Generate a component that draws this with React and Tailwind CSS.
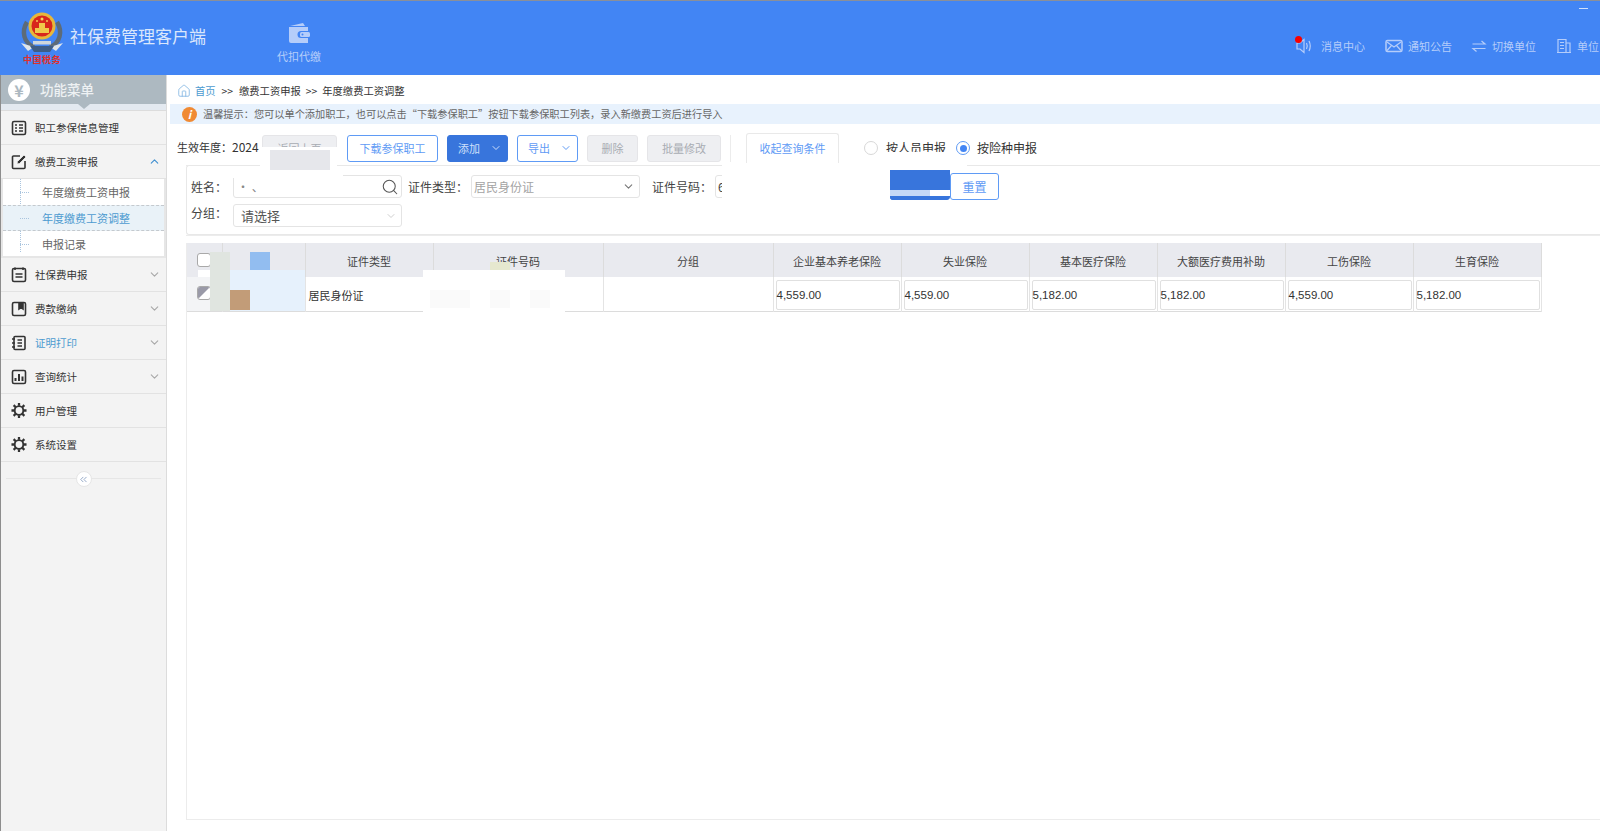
import { ChevronDown, ChevronUp, ChevronsLeft, Home, Search } from "lucide-react";

const font = { fontFamily: '"Noto Sans CJK SC", "Liberation Sans", sans-serif' };

const columns = [
  { label: "企业基本养老保险", value: "4,559.00" },
  { label: "失业保险", value: "4,559.00" },
  { label: "基本医疗保险", value: "5,182.00" },
  { label: "大额医疗费用补助", value: "5,182.00" },
  { label: "工伤保险", value: "4,559.00" },
  { label: "生育保险", value: "5,182.00" },
];

function Logo() {
  return (
    <div className="w-[44px] flex flex-col items-center shrink-0">
      <svg width="44" height="42" viewBox="0 0 44 42">
        <path d="M7 10 C1 20 4 31 14 35 M37 10 C43 20 40 31 30 35" stroke="#5d6b78" strokeWidth="4.5" fill="none" />
        <path d="M1 31 L14 35 L8 39 Z M43 31 L30 35 L36 39 Z" fill="#dfe5ea" />
        <path d="M10 34 L34 34 L30 40 L14 40 Z" fill="#3f5d86" />
        <circle cx="22" cy="14" r="13.5" fill="#e8b73a" />
        <circle cx="22" cy="14" r="10.5" fill="#d8261c" />
        <rect x="15" y="16" width="14" height="5" fill="#f0c84a" />
        <rect x="19" y="11" width="6" height="5" fill="#f0c84a" />
        <circle cx="22" cy="7" r="1.5" fill="#f5d65a" />
        <circle cx="17" cy="9" r="0.9" fill="#f5d65a" />
        <circle cx="27" cy="9" r="0.9" fill="#f5d65a" />
        <rect x="13" y="29" width="18" height="3.5" fill="#cfd6dc" />
      </svg>
      <span
        className="text-[9px] leading-[12px] tracking-[0.5px] font-bold text-[#e0302a] whitespace-nowrap"
        style={{ fontFamily: '"Noto Sans CJK SC", serif' }}
      >
        中国税务
      </span>
    </div>
  );
}

function WalletIcon() {
  return (
    <svg width="24" height="24" viewBox="0 0 24 24" fill="#b5cdfa">
      <path d="M3 5 L16 2 L18 5 Z" />
      <path d="M2 6 H21 V10 H14 a3.5 3.5 0 0 0 0 7 H21 V22 H4 a2 2 0 0 1 -2 -2 Z" />
      <rect x="13" y="11" width="10" height="5" rx="1.5" />
      <circle cx="15.5" cy="13.5" r="1" fill="#4285f4" />
    </svg>
  );
}

function TopIcon({ kind }) {
  const p = { width: 18, height: 16, viewBox: "0 0 18 16", fill: "none", stroke: "#b5cdfa", strokeWidth: 1.2 };
  return (
    <svg {...p}>
      {kind === "sound" && (
        <>
          <path d="M2 5 H5 L9 1.5 V14.5 L5 11 H2 Z" />
          <path d="M11.5 5 Q13 8 11.5 11 M14 3 Q16.5 8 14 13" />
        </>
      )}
      {kind === "mail" && (
        <>
          <rect x="1" y="2.5" width="16" height="11" rx="1.5" strokeWidth="1.5" />
          <path d="M2 4 L9 9 L16 4 M2 12.5 L6.5 7.5 M16 12.5 L11.5 7.5" />
        </>
      )}
      {kind === "swap" && <path d="M2.5 6 H15 L11.5 3 M15.5 10.5 H3 L6.5 13.5" />}
      {kind === "unit" && (
        <path d="M2 14.5 H16 M3 14.5 V1.5 H11 V14.5 M11 5 H15 V14.5 M5 4.5 H9 M5 7.5 H9 M5 10.5 H9" />
      )}
    </svg>
  );
}

function TopLink({ icon, label, dot, className }) {
  return (
    <div className={`flex items-center text-[11px] text-[#b5cdfa] whitespace-nowrap shrink-0 ${className}`}>
      <span className="relative flex w-[18px] justify-center">
        <TopIcon kind={icon} />
        {dot && <span className="absolute left-[0px] -top-[2px] w-[7px] h-[7px] rounded-full bg-[#f80000]" />}
      </span>
      <span>{label}</span>
    </div>
  );
}

function MenuGlyph({ kind }) {
  const common = { width: 16, height: 16, viewBox: "0 0 16 16", fill: "none", stroke: "#333", strokeWidth: 1.6 };
  if (kind === "gear") {
    return (
      <svg width="17" height="17" viewBox="0 0 17 17" fill="none" stroke="#333">
        <circle cx="8.5" cy="8.5" r="4.6" strokeWidth="2" />
        <path
          d="M8.5 .5 V3.5 M8.5 13.5 V16.5 M.5 8.5 H3.5 M13.5 8.5 H16.5 M2.8 2.8 L5 5 M12 12 L14.2 14.2 M14.2 2.8 L12 5 M5 12 L2.8 14.2"
          strokeWidth="2.4"
        />
      </svg>
    );
  }
  return (
    <svg {...common}>
      {kind === "book" ? (
        <>
          <rect x="3" y="1.5" width="11" height="13" rx="1" />
          <path d="M1 4 H4 M1 8 H4 M1 12 H4 M6.5 5 H11 M6.5 8 H11 M6.5 11 H11" />
        </>
      ) : kind === "edit" ? (
        <path d="M9 2 H2.5 a1 1 0 0 0 -1 1 V13.5 a1 1 0 0 0 1 1 H13 a1 1 0 0 0 1 -1 V7" />
      ) : (
        <rect x="1.5" y="1.5" width="13" height="13" rx="1.5" />
      )}
      {kind === "list" && <path d="M4 5 H6 M4 8 H6 M4 11 H6 M8 5 H12 M8 8 H12 M8 11 H12" />}
      {kind === "edit" && <path d="M6 10 L6.5 7.5 L13 1 L15 3 L8.5 9.5 Z" fill="#333" stroke="#f3f3f3" strokeWidth="0.8" />}
      {kind === "cal" && <path d="M4 .5 V3 M12 .5 V3 M4.5 7 H11.5 M4.5 10 H11.5" />}
      {kind === "pay" && <path d="M8 2 V8 L10 6.5 L12 8 V2" fill="#333" />}
      {kind === "chart" && <path d="M4.5 12 V9 M8 12 V5 M11.5 12 V7.5" strokeWidth="2" />}
    </svg>
  );
}

function MenuItem({ icon, label, chevron, open, active }) {
  return (
    <div className="h-[34px] flex items-center pl-[10px] pr-[5px] border-b border-[#e2e2e2] shrink-0">
      <span className="w-[16px] flex justify-center"><MenuGlyph kind={icon} /></span>
      <span className={`ml-[8px] text-[10.5px] ${active ? "text-[#4d9bd0]" : "text-[#333]"}`}>{label}</span>
      {chevron && (
        <span className="ml-auto">
          {open ? <ChevronUp size={13} color="#3f8fd0" strokeWidth={2} /> : <ChevronDown size={13} color="#a8a8a8" strokeWidth={2} />}
        </span>
      )}
    </div>
  );
}

function SubItem({ label, active }) {
  return (
    <div className={`h-[26px] flex items-center pl-[17px] relative ${active ? "bg-[#e9f2f8] border-y border-dashed border-[#c4c9ce]" : ""}`}>
      <span className="w-[9px] border-t border-dotted border-[#a9c4de]" />
      <span className={`ml-[13px] text-[11px] ${active ? "text-[#4d9bd0]" : "text-[#666]"}`}>{label}</span>
    </div>
  );
}

function Sidebar() {
  return (
    <aside className="w-[167px] shrink-0 bg-[#f3f3f3] border-l border-[#8d8d8d] border-r border-r-[#dcdcdc] flex flex-col">
      <div className="h-[29px] bg-[#adb9c1] flex items-center pl-[7px] shrink-0">
        <span className="w-[22px] h-[22px] rounded-full bg-white text-[#adb9c1] text-[16px] font-bold flex items-center justify-center">¥</span>
        <span className="ml-[10px] text-[13.5px] text-[#eef1f3] font-medium">功能菜单</span>
      </div>
      <div className="h-[7px] bg-[#e3e9f0] relative shrink-0 border-b border-[#dcdcdc]">
        <span className="absolute left-[77px] top-0 border-x-[6px] border-x-transparent border-t-[5px] border-t-[#adb9c1]" />
      </div>
      <MenuItem icon="list" label="职工参保信息管理" />
      <MenuItem icon="edit" label="缴费工资申报" chevron open />
      <div className="relative h-[79px] shrink-0 bg-white border-x-[2px] border-b-[2px] border-[#e6e6e6]">
        <span className="absolute left-[17px] top-0 h-[73px] border-l border-dotted border-[#a9c4de]" />
        <SubItem label="年度缴费工资申报" />
        <SubItem label="年度缴费工资调整" active />
        <SubItem label="申报记录" />
      </div>
      <MenuItem icon="cal" label="社保费申报" chevron />
      <MenuItem icon="pay" label="费款缴纳" chevron />
      <MenuItem icon="book" label="证明打印" chevron active />
      <MenuItem icon="chart" label="查询统计" chevron />
      <MenuItem icon="gear" label="用户管理" />
      <MenuItem icon="gear" label="系统设置" />
      <div className="relative mx-[5px] mt-[16px] border-t border-[#e6e6e6] flex justify-center">
        <span className="absolute -top-[8px] w-[16px] h-[16px] rounded-full bg-white border border-[#e6e6e6] flex items-center justify-center">
          <ChevronsLeft size={11} color="#8da3c4" />
        </span>
      </div>
    </aside>
  );
}

function Btn({ children, kind, className = "" }) {
  const styles = {
    line: "border-[#5f9bf5] text-[#5f9bf5] bg-white",
    solid: "border-[#3875dc] bg-[#3875dc] text-[#cfe0fb]",
    off: "border-[#e5e5e8] bg-[#eeeff2] text-[#a8acb2]",
  };
  return (
    <span className={`h-[27px] rounded-[3px] border flex items-center justify-center text-[11px] shrink-0 ${styles[kind]} ${className}`}>
      {children}
    </span>
  );
}

function Toolbar() {
  return (
    <div className="h-[30px] mt-[9px] ml-[177px] flex items-center text-[11px] text-[#333]">
      <span className="w-[85px] -mt-[2px] overflow-hidden whitespace-nowrap">生效年度：<span className="text-[12px]">2024</span></span>
      <Btn kind="off" className="w-[75px]">返回上页</Btn>
      <Btn kind="line" className="w-[91px] ml-[10px]">下载参保职工</Btn>
      <Btn kind="solid" className="w-[61px] ml-[9px] gap-[10px] pl-[5px]">
        <span>添加</span>
        <ChevronDown size={12} />
      </Btn>
      <Btn kind="line" className="w-[61px] ml-[9px] gap-[10px] pl-[5px]">
        <span>导出</span>
        <ChevronDown size={12} />
      </Btn>
      <Btn kind="off" className="w-[51px] ml-[9px]">删除</Btn>
      <Btn kind="off" className="w-[74px] ml-[9px]">批量修改</Btn>
      <span className="w-px h-[27px] bg-[#ececec] ml-[9px]" />
      <span className="w-[93px] h-[30px] ml-[15px] rounded-t-[3px] border border-b-0 border-[#e9e9e9] flex items-center justify-center text-[#5f9bf5] bg-white">
        收起查询条件
      </span>
      <span className="w-[14px] h-[14px] rounded-full border border-[#d8d8d8] ml-[25px]" />
      <span className="ml-[8px] text-[12px]">按人员申报</span>
      <span className="w-[14px] h-[14px] rounded-full border border-[#5f9bf5] ml-[10px] flex items-center justify-center">
        <span className="w-[7px] h-[7px] rounded-full bg-[#4285f4]" />
      </span>
      <span className="ml-[7px] text-[12px]">按险种申报</span>
    </div>
  );
}

function Field({ children, className = "" }) {
  return (
    <span className={`h-[23px] w-[169px] rounded-[3px] border border-[#e4e4e4] bg-white flex items-center shrink-0 ${className}`}>
      {children}
    </span>
  );
}

function QueryBox() {
  return (
    <div className="ml-[186px] -mt-[1px] h-[70px] border border-[#e8e8e8] rounded-l-[3px] border-r-0 pl-[4px] text-[12px] text-[#444]">
      <div className="flex items-center mt-[7px]">
        <span className="w-[42px]">姓名：</span>
        <Field className="justify-between pl-[3px] pr-[2px] text-[#888]">
          <span>· 、</span>
          <Search size={18} color="#555" strokeWidth={1.4} />
        </Field>
        <span className="ml-[6px]">证件类型：</span>
        <Field className="ml-[3px] pl-[2px] pr-[4px] justify-between text-[#a3a3a3]">
          居民身份证 <ChevronDown size={13} color="#777" />
        </Field>
        <span className="ml-[12px]">证件号码：</span>
        <Field className="ml-[3px] w-[170px] pl-[2px]">6</Field>
        <Btn kind="solid" className="w-[60px] ml-[5px]">查询</Btn>
        <Btn kind="line" className="w-[49px] h-[26px] text-[12px]">重置</Btn>
      </div>
      <div className="flex items-center mt-[4px]">
        <span className="w-[42px] -mt-[5px]">分组：</span>
        <Field className="pl-[7px] pr-[4px] justify-between text-[13px] text-[#555]">
          请选择 <ChevronDown size={12} color="#cfcfcf" />
        </Field>
      </div>
    </div>
  );
}

function DataTable() {
  const th = "h-[34px] pt-[2px] bg-[#e9eaef] border-r border-[#dcdcdc] text-[11px] font-normal text-[#444] text-center";
  return (
    <table className="table-fixed w-[1354px] border-b border-[#dcdcdc] text-[11px] text-[#333] border-collapse">
      <colgroup>
        <col className="w-[35px]" />
        <col className="w-[83px]" />
        <col className="w-[128px]" />
        <col className="w-[170px]" />
        <col className="w-[170px]" />
        {columns.map((c) => (
          <col key={c.label} className="w-[128px]" />
        ))}
      </colgroup>
      <thead>
        <tr>
          <th className={th}>
            <span className="block w-[14px] h-[14px] ml-[10px] -mt-[3px] rounded-[3px] border border-[#a9a9a9] bg-white" />
          </th>
          <th className={th} />
          <th className={th}>证件类型</th>
          <th className={th}>证件号码</th>
          <th className={th}>分组</th>
          {columns.map((c) => (
            <th key={c.label} className={th}>{c.label}</th>
          ))}
        </tr>
      </thead>
      <tbody>
        <tr className="h-[34px]">
          <td className="bg-[#f3f4f6] border-r border-[#e4e4e4]">
            <span className="relative block w-[14px] h-[14px] ml-[10px] -mt-[1px] rounded-[3px] border border-[#a9a9a9] bg-white overflow-hidden">
              <span className="absolute left-0 top-0 border-t-[12px] border-r-[12px] border-t-[#9a9aa8] border-r-transparent" />
            </span>
          </td>
          <td />
          <td className="border-x border-[#e4e4e4] pl-[3px] pt-[2px] text-[11px]">居民身份证</td>
          <td className="border-r border-[#e4e4e4]" />
          <td className="border-r border-[#e4e4e4]" />
          {columns.map((c) => (
            <td key={c.label} className="border-r border-[#e4e4e4] pl-[2px] pr-[1px] pt-[2px]">
              <span
                className="h-[30px] pt-[1px] flex items-center border border-[#e0e0e0] rounded-[2px] bg-white text-[11.5px]"
                style={{ fontFamily: '"Liberation Sans", sans-serif' }}
              >
                {c.value}
              </span>
            </td>
          ))}
        </tr>
      </tbody>
    </table>
  );
}

export default function App() {
  return (
    <div className="w-[1600px] h-[831px] overflow-hidden bg-white flex flex-col relative" style={font}>
      <header className="h-[75px] shrink-0 bg-[#4285f4] border-t border-[#8a8f99] flex relative">
        <div className="ml-[20px] mt-[11px]"><Logo /></div>
        <div className="ml-[6px] mt-[23px] text-[17px] leading-6 text-[#dbe7fc]">社保费管理客户端</div>
        <div className="ml-[71px] mt-[20px] w-[44px] flex flex-col items-center gap-[3px] text-[11px] text-[#b5cdfa]">
          <WalletIcon />
          <span>代扣代缴</span>
        </div>
        <div className="absolute left-[1295px] top-[37px] flex items-center">
          <TopLink dot icon="sound" label="消息中心" className="gap-[8px]" />
          <TopLink icon="mail" label="通知公告" className="ml-[20px] gap-[5px]" />
          <TopLink icon="swap" label="切换单位" className="ml-[18px] gap-[4px]" />
          <TopLink icon="unit" label="单位" className="ml-[19px] gap-[4px]" />
        </div>
        <span className="absolute left-[1579px] top-[7px] w-[9px] h-[1px] bg-[#cfe0fb]" />
      </header>

      <div className="flex flex-1 min-h-0">
        <Sidebar />
        <main className="flex-1 min-w-0 flex flex-col">
          <div className="h-[29px] pt-[2px] flex items-center pl-[10px] text-[10.3px] text-[#333] shrink-0">
            <Home size={14} color="#7fb4e2" strokeWidth={1.4} />
            <span className="ml-[4px] text-[#4d9bd0]">首页</span>
            <span className="mx-[6px]">&gt;&gt;</span>
            <span>缴费工资申报</span>
            <span className="mx-[5px]">&gt;&gt;</span>
            <span>年度缴费工资调整</span>
          </div>
          <div className="h-[20px] bg-[#e8f2fd] flex items-center ml-[3px] pl-[12px] text-[10.2px] text-[#666] shrink-0">
            <span className="w-[15px] h-[15px] rounded-full bg-[#f08a34] text-white text-[11px] italic font-bold flex items-center justify-center">i</span>
            <span className="ml-[6px]">温馨提示：您可以单个添加职工，也可以点击“下载参保职工”按钮下载参保职工列表，录入新缴费工资后进行导入</span>
          </div>
          <div className="-ml-[167px]">
            <Toolbar />
            <div className="h-px bg-[#ececec] ml-[186px] mt-[2px]" />
            <QueryBox />
            <div className="h-px bg-[#ececec] ml-[186px]" />
            <div className="ml-[186px] mt-[7px] h-[577px] border-l border-b border-[#ececec]">
              <DataTable />
            </div>
          </div>
        </main>
      </div>

      {/* redacted blocks from the reference */}
      <span className="absolute left-[260px] top-[147px] w-[77px] h-[23px] bg-white" />
      <span className="absolute left-[270px] top-[150px] w-[60px] h-[20px] bg-[#e6e7eb]" />
      <span className="absolute left-[233px] top-[170px] w-[110px] h-[8px] bg-white" />
      <span className="absolute left-[198px] top-[270px] w-[12px] h-[7px] bg-white" />
      <span className="absolute left-[210px] top-[252px] w-[20px] h-[59px] bg-[#e0e5e0]" />
      <span className="absolute left-[250px] top-[252px] w-[20px] h-[18px] bg-[#92bdf0]" />
      <span className="absolute left-[230px] top-[270px] w-[75px] h-[41px] bg-[#e6f1fc]" />
      <span className="absolute left-[230px] top-[290px] w-[20px] h-[20px] bg-[#c29c78]" />
      <span className="absolute left-[490px] top-[262px] w-[20px] h-[8px] bg-[#e6e8cf]" />
      <span className="absolute left-[423px] top-[270px] w-[142px] h-[42px] bg-white" />
      <span className="absolute left-[430px] top-[290px] w-[40px] h-[18px] bg-[#fafafa]" />
      <span className="absolute left-[490px] top-[290px] w-[20px] h-[18px] bg-[#fafafa]" />
      <span className="absolute left-[530px] top-[290px] w-[20px] h-[18px] bg-[#fafafa]" />
      <span className="absolute left-[722px] top-[165px] w-[168px] h-[36px] bg-white" />
      <span className="absolute left-[880px] top-[152px] w-[70px] h-[18px] bg-white" />
      <span className="absolute left-[950px] top-[165px] w-[17px] h-[8px] bg-white" />
      <span className="absolute left-[890px] top-[170px] w-[60px] h-[20px] bg-[#3875dc]" />
      <span className="absolute left-[890px] top-[190px] w-[40px] h-[6px] bg-[#c5d8f6]" />
      <span className="absolute left-[930px] top-[190px] w-[20px] h-[6px] bg-white" />
      <span className="absolute left-[890px] top-[196px] w-[52px] h-[4px] rounded-b-[3px] bg-[#3875dc]" />
    </div>
  );
}
